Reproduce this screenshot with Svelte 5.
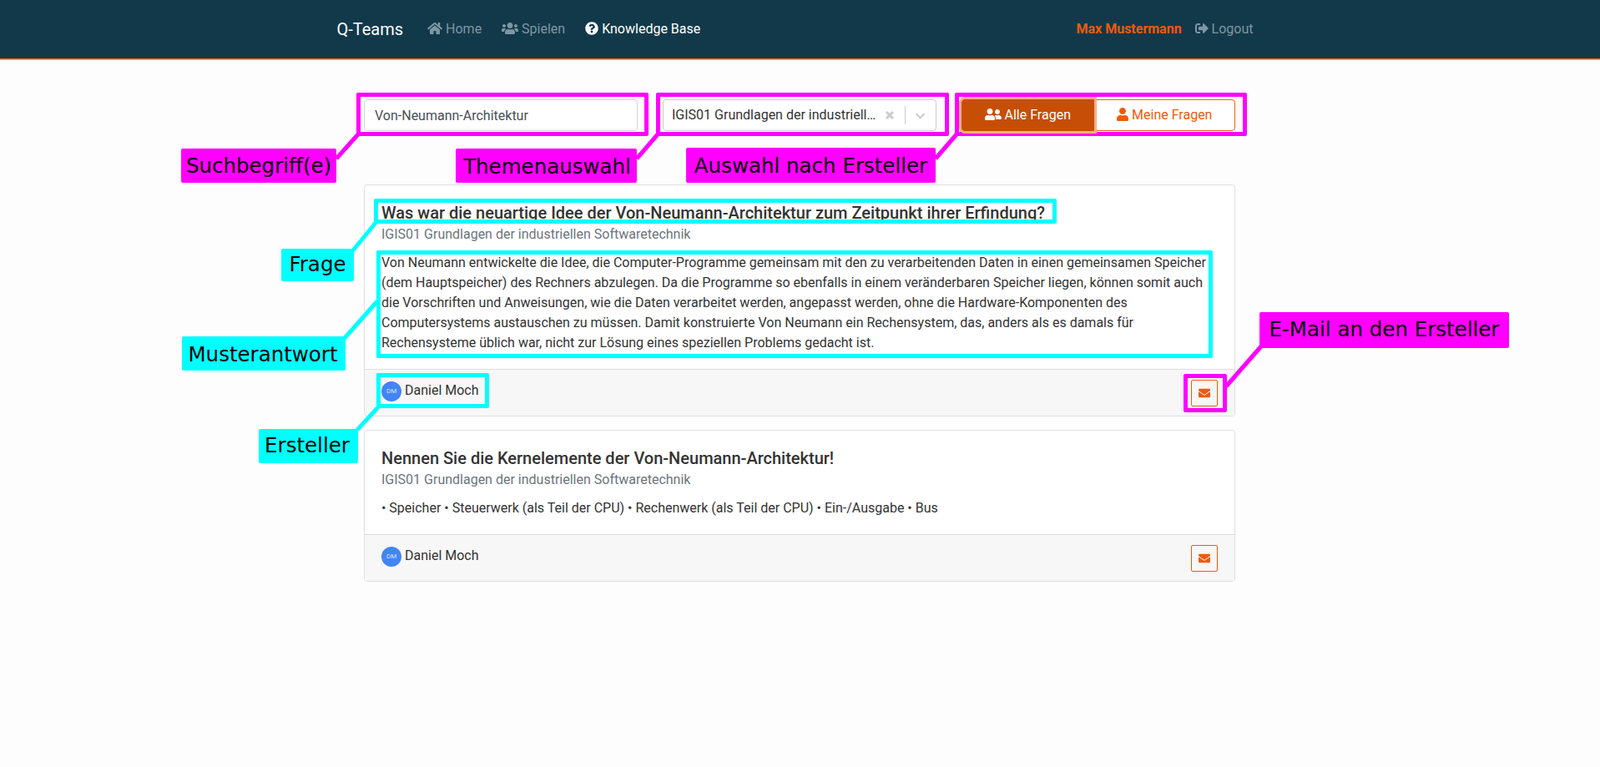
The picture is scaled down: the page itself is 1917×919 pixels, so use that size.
<script lang="ts">
  const icons = {
    home: ['0 0 576 512', 'M280.37 148.26L96 300.11V464a16 16 0 0 0 16 16l112.06-.29a16 16 0 0 0 15.92-16V368a16 16 0 0 1 16-16h64a16 16 0 0 1 16 16v95.64a16 16 0 0 0 16 16.05L464 480a16 16 0 0 0 16-16V300L295.67 148.26a12.19 12.19 0 0 0-15.3 0zM571.6 251.47L488 182.56V44.05a12 12 0 0 0-12-12h-56a12 12 0 0 0-12 12v72.61L318.47 43a48 48 0 0 0-61 0L4.34 251.47a12 12 0 0 0-1.6 16.9l25.5 31A12 12 0 0 0 45.15 301l235.22-193.74a12.19 12.19 0 0 1 15.3 0L530.9 301a12 12 0 0 0 16.9-1.6l25.5-31a12 12 0 0 0-1.7-16.93z'],
    users: ['0 0 640 512', 'M96 224c35.3 0 64-28.7 64-64s-28.7-64-64-64-64 28.7-64 64 28.7 64 64 64zm448 0c35.3 0 64-28.7 64-64s-28.7-64-64-64-64 28.7-64 64 28.7 64 64 64zm32 32h-64c-17.6 0-33.5 7.1-45.1 18.6 40.3 22.1 68.9 62 75.1 109.4h66c17.7 0 32-14.3 32-32v-32c0-35.3-28.7-64-64-64zm-256 0c61.9 0 112-50.1 112-112S381.9 32 320 32 208 82.1 208 144s50.1 112 112 112zm76.8 32h-8.3c-20.8 10-43.9 16-68.5 16s-47.6-6-68.5-16h-8.3C179.6 288 128 339.6 128 403.2V432c0 26.5 21.5 48 48 48h288c26.5 0 48-21.5 48-48v-28.8c0-63.6-51.6-115.2-115.2-115.2zm-223.7-13.4C161.5 263.1 145.6 256 128 256H64c-35.3 0-64 28.7-64 64v32c0 17.7 14.3 32 32 32h65.9c6.3-47.4 34.9-87.3 75.2-109.4z'],
    question: ['0 0 512 512', 'M504 256c0 136.997-111.043 248-248 248S8 392.997 8 256C8 119.083 119.043 8 256 8s248 111.083 248 248zM262.655 90c-54.497 0-89.255 22.957-116.549 63.758-3.536 5.286-2.353 12.415 2.715 16.258l34.699 26.31c5.205 3.947 12.621 3.008 16.665-2.122 17.864-22.658 30.113-35.797 57.303-35.797 20.429 0 45.698 13.148 45.698 32.958 0 14.976-12.363 22.667-32.534 33.976C247.128 238.528 216 254.941 216 296v4c0 6.627 5.373 12 12 12h56c6.627 0 12-5.373 12-12v-1.333c0-28.462 83.186-29.647 83.186-106.667 0-58.002-60.165-102-116.531-102zM256 338c-25.365 0-46 20.635-46 46 0 25.364 20.635 46 46 46s46-20.636 46-46c0-25.365-20.635-46-46-46z'],
    logout: ['0 0 512 512', 'M497 273L329 441c-15 15-41 4.5-41-17v-96H152c-13.3 0-24-10.7-24-24v-96c0-13.3 10.7-24 24-24h136V88c0-21.4 25.9-32 41-17l168 168c9.3 9.4 9.3 24.6 0 34zM192 436v-40c0-6.6-5.4-12-12-12H96c-17.7 0-32-14.3-32-32V160c0-17.7 14.3-32 32-32h84c6.6 0 12-5.4 12-12V76c0-6.6-5.4-12-12-12H96c-53 0-96 43-96 96v192c0 53 43 96 96 96h84c6.6 0 12-5.4 12-12z'],
    friends: ['0 0 640 512', 'M192 256c61.9 0 112-50.1 112-112S253.9 32 192 32 80 82.1 80 144s50.1 112 112 112zm76.8 32h-8.3c-20.8 10-43.9 16-68.5 16s-47.7-6-68.5-16h-8.3C51.6 288 0 339.6 0 403.2V432c0 26.5 21.5 48 48 48h288c26.5 0 48-21.5 48-48v-28.8c0-63.6-51.6-115.2-115.2-115.2zM480 256c53 0 96-43 96-96s-43-96-96-96-96 43-96 96 43 96 96 96zm48 32h-3.8c-13.9 4.8-28.6 8-44.2 8s-30.3-3.2-44.2-8H432c-20.4 0-39.2 5.9-55.7 15.4 24.4 26.3 39.7 61.2 39.7 99.8v38.4c0 2.2-.5 4.3-.6 6.4H592c26.5 0 48-21.5 48-48 0-61.9-50.1-112-112-112z'],
    user: ['0 0 448 512', 'M224 256c70.7 0 128-57.3 128-128S294.7 0 224 0 96 57.3 96 128s57.3 128 128 128zm89.6 32h-16.7c-22.2 10.2-46.9 16-72.9 16s-50.6-5.8-72.9-16h-16.7C60.2 288 0 348.2 0 422.4V464c0 26.5 21.5 48 48 48h352c26.5 0 48-21.5 48-48v-41.6c0-74.2-60.2-134.4-134.4-134.4z'],
    mail: ['0 0 512 512', 'M502.3 190.8c3.9-3.1 9.7-.2 9.7 4.7V400c0 26.5-21.5 48-48 48H48c-26.5 0-48-21.5-48-48V195.6c0-5 5.7-7.8 9.7-4.7 22.4 17.4 52.1 39.5 154.1 113.6 21.1 15.4 56.7 47.8 92.2 47.6 35.7.3 72-32.8 92.3-47.6 102-74.1 131.6-96.3 154-113.7zM256 320c23.2.4 56.6-29.2 73.4-41.4 132.7-96.3 142.8-104.7 173.4-128.7 5.8-4.5 9.2-11.5 9.2-18.9v-19c0-26.5-21.5-48-48-48H48C21.5 64 0 85.5 0 112v19c0 7.4 3.4 14.3 9.2 18.9 30.6 23.9 40.7 32.4 173.4 128.7 16.8 12.2 50.2 41.8 73.4 41.4z']
  };

  const subject = 'IGIS01 Grundlagen der industriellen Softwaretechnik';

  const questions = [
    {
      title: 'Was war die neuartige Idee der Von-Neumann-Architektur zum Zeitpunkt ihrer Erfindung?',
      answer: 'Von Neumann entwickelte die Idee, die Computer-Programme gemeinsam mit den zu verarbeitenden Daten in einen gemeinsamen Speicher (dem Hauptspeicher) des Rechners abzulegen. Da die Programme so ebenfalls in einem veränderbaren Speicher liegen, können somit auch die Vorschriften und Anweisungen, wie die Daten verarbeitet werden, angepasst werden, ohne die Hardware-Komponenten des Computersystems austauschen zu müssen. Damit konstruierte Von Neumann ein Rechensystem, das, anders als es damals für Rechensysteme üblich war, nicht zur Lösung eines speziellen Problems gedacht ist.'
    },
    {
      title: 'Nennen Sie die Kernelemente der Von-Neumann-Architektur!',
      answer: '• Speicher • Steuerwerk (als Teil der CPU) • Rechenwerk (als Teil der CPU) • Ein-/Ausgabe • Bus'
    }
  ];

  // annotations drawn on top of the screenshot: [x, y, w, h]
  const boxes = [
    { c: 'magenta', r: [427, 111, 350, 52] },
    { c: 'magenta', r: [786, 111, 351, 52] },
    { c: 'magenta', r: [1144, 111, 350, 52] },
    { c: 'cyan', r: [448, 238, 818, 30] },
    { c: 'cyan', r: [451, 300, 1002, 129] },
    { c: 'cyan', r: [451, 447, 135, 42] },
    { c: 'magenta', r: [1418, 448, 52, 46] }
  ];

  // pad: [top, right, bottom, left], nudges the text inside the label
  const labels = [
    { c: 'magenta', t: 'Suchbegriff(e)', r: [217, 178, 186, 41], pad: [0, 0, 0, 0] },
    { c: 'magenta', t: 'Themenauswahl', r: [546, 178, 217, 41], pad: [2, 0, 0, 2] },
    { c: 'magenta', t: 'Auswahl nach Ersteller', r: [822, 177, 299, 42], pad: [2, 0, 0, 0] },
    { c: 'cyan', t: 'Frage', r: [337, 298, 87, 39], pad: [0, 0, 2, 0] },
    { c: 'cyan', t: 'Musterantwort', r: [218, 403, 196, 41], pad: [2, 2, 0, 0] },
    { c: 'cyan', t: 'Ersteller', r: [310, 514, 119, 41], pad: [0, 3, 2, 0] },
    { c: 'magenta', t: 'E-Mail an den Ersteller', r: [1509, 374, 299, 43], pad: [0, 0, 2, 0] }
  ];

  const lines = [
    { c: 'magenta', p: '403,190 429,161' },
    { c: 'magenta', p: '763,190 788,161' },
    { c: 'magenta', p: '1121,190 1146,161' },
    { c: 'cyan', p: '423,300 450,267' },
    { c: 'cyan', p: '413,405 452,361' },
    { c: 'cyan', p: '428,515 453,488' },
    { c: 'magenta', p: '1469,463 1511,415' }
  ];

  const rect = (r: number[]) => `left:${r[0]}px;top:${r[1]}px;width:${r[2]}px;height:${r[3]}px`;
  const padding = (p: number[]) => `padding:${p.map((v) => v + 'px').join(' ')}`;
</script>

{#snippet icon(name: keyof typeof icons, cls = '')}
  <svg class="icon {cls}" viewBox={icons[name][0]} aria-hidden="true"><path fill="currentColor" d={icons[name][1]} /></svg>
{/snippet}

<nav class="navbar">
  <div class="nav-inner">
    <a class="brand" href="#top">Q-Teams</a>
    <a class="nav-link" href="#top">{@render icon('home')} Home</a>
    <a class="nav-link" href="#top">{@render icon('users')} Spielen</a>
    <a class="nav-link active" href="#top">{@render icon('question')} Knowledge Base</a>
    <span class="user-name">Max Mustermann</span>
    <a class="nav-link" href="#top">{@render icon('logout')} Logout</a>
  </div>
</nav>

<main class="content">
  <div class="filters">
    <input class="search" type="text" value="Von-Neumann-Architektur" />
    <div class="select">
      <span class="select-value">IGIS01 Grundlagen der industriellen Softwaretechnik</span>
      <svg class="select-clear" viewBox="0 0 12 12"><path d="M2 2l8 8M10 2l-8 8" /></svg>
      <span class="select-sep"></span>
      <svg class="select-arrow" viewBox="0 0 12 12"><path d="M1.5 4l4.5 4.5L10.500 4" /></svg>
    </div>
    <div class="btn-group">
      <button class="btn on">{@render icon('friends')} Alle Fragen</button>
      <button class="btn">{@render icon('user')} Meine Fragen</button>
    </div>
  </div>

  {#each questions as q}
    <article class="card">
      <div class="card-body">
        <h5>{q.title}</h5>
        <div class="subject">{subject}</div>
        <p>{q.answer}</p>
      </div>
      <div class="card-footer">
        <div class="author">
          <span class="avatar">DM</span>
          <span class="author-name">Daniel Moch</span>
        </div>
        <button class="mail">{@render icon('mail')}</button>
      </div>
    </article>
  {/each}
</main>

<div class="overlay">
  <svg class="overlay-lines" width="1917" height="919">
    {#each lines as l}
      <polyline points={l.p} stroke={l.c} stroke-width="5" fill="none" />
    {/each}
  </svg>
  {#each boxes as b}
    <div class="anno-box {b.c}" style={rect(b.r)}></div>
  {/each}
  {#each labels as l}
    <div class="anno-label {l.c}" style="{rect(l.r)};{padding(l.pad)}">{l.t}</div>
  {/each}
</div>

<style>
  :global(body) {
    background: #fdfdfd;
    color: #333;
    font-family: Roboto, "Liberation Sans", sans-serif;
    font-size: 16px;
    line-height: 24px;
  }

  .icon {
    display: inline-block;
    height: 1em;
    width: auto;
    vertical-align: -0.125em;
  }

  .navbar {
    height: 70px;
    background: #12394a;
    border-bottom: 1px solid #f05a0a;
    box-shadow: 0 1px 0 #f8ad85;
  }

  .nav-inner {
    width: 1110px;
    height: 70px;
    margin: 0 auto;
    display: flex;
    align-items: center;
  }

  .brand {
    color: #fff;
    font-size: 20px;
    margin-right: 17px;
    text-decoration: none;
  }

  .nav-link {
    color: #7d97a3;
    padding: 0 12px;
    text-decoration: none;
  }

  .nav-link.active {
    color: #fff;
  }

  .user-name {
    margin-left: auto;
    margin-right: 4px;
    color: #f05a0a;
    font-weight: 700;
  }

  .content {
    width: 1044px;
    margin: 0 auto;
    padding: 48px 1px 0 0;
  }

  .filters {
    display: grid;
    grid-template-columns: repeat(3, 328px);
    gap: 30px;
    margin-bottom: 64px;
  }

  .search {
    box-sizing: border-box;
    height: 38px;
    width: 100%;
    padding: 0 12px;
    border: 1px solid #ced4da;
    border-radius: 4px;
    background: #fff;
    color: #495057;
    font: inherit;
  }

  .select {
    box-sizing: border-box;
    height: 38px;
    display: flex;
    align-items: center;
    padding: 0 12px 0 10px;
    border: 1px solid #ccc;
    border-radius: 4px;
    background: #fff;
    color: #333;
  }

  .select-value {
    flex: 1;
    min-width: 0;
    white-space: nowrap;
    overflow: hidden;
    text-overflow: ellipsis;
  }

  .select-clear,
  .select-arrow {
    flex-shrink: 0;
    fill: none;
    stroke: #ccc;
  }

  .select-clear {
    width: 12px;
    height: 12px;
    margin-left: 10px;
    stroke-width: 3;
  }

  .select-arrow {
    width: 13px;
    height: 13px;
    stroke-width: 2;
  }

  .select-sep {
    width: 1px;
    height: 22px;
    margin: 0 11px 0 12px;
    background: #ccc;
  }

  .btn-group {
    display: flex;
  }

  .btn {
    flex: 1 1 auto;
    height: 38px;
    border: 1px solid #f05a0a;
    border-radius: 0 4px 4px 0;
    background: #fff;
    color: #f05a0a;
    font: inherit;
  }

  .btn.on {
    position: relative;
    z-index: 1;
    background: #c74e07;
    border-color: #c74e07;
    border-radius: 4px 0 0 4px;
    box-shadow: 0 0 0 3px #f8ad85;
    color: #fff;
  }

  .card {
    background: #fff;
    border: 1px solid #dfdfdf;
    border-radius: 4px;
    margin-bottom: 16px;
  }

  .card-body {
    padding: 20px 20px 19px;
  }

  h5 {
    margin: 0;
    font-size: 20px;
    font-weight: 500;
    line-height: 27px;
  }

  .subject {
    color: #6c757d;
  }

  p {
    margin: 10px 0 0;
  }

  .card-footer {
    box-sizing: border-box;
    height: 56px;
    display: flex;
    justify-content: space-between;
    align-items: flex-start;
    padding: 12px 20px 0;
    background: #f7f7f7;
    border-top: 1px solid #dfdfdf;
    border-radius: 0 0 4px 4px;
  }

  .author {
    display: flex;
    gap: 4px;
    align-items: flex-start;
  }

  .author-name {
    margin-top: 1px;
  }

  .avatar {
    width: 24px;
    height: 24px;
    margin-top: 2px;
    border-radius: 50%;
    background: #4285f4;
    color: #d6e4fd;
    font-size: 8px;
    text-align: center;
  }

  .mail {
    width: 32px;
    height: 32px;
    padding: 0;
    border: 1px solid #f05a0a;
    border-radius: 2px;
    background: transparent;
    color: #f05a0a;
    font-size: 14px;
  }

  .overlay {
    position: absolute;
    inset: 0 auto auto 0;
    width: 1917px;
    height: 919px;
    pointer-events: none;
  }

  .overlay-lines {
    position: absolute;
    left: 0;
    top: 0;
  }

  .anno-box {
    position: absolute;
    box-sizing: border-box;
    border: 5px solid;
    border-radius: 2px;
  }

  .anno-box.magenta {
    border-color: magenta;
  }

  .anno-box.cyan {
    border-color: cyan;
  }

  .anno-label {
    position: absolute;
    box-sizing: border-box;
    display: flex;
    align-items: center;
    justify-content: center;
    border-radius: 2px;
    color: #000;
    font-family: "DejaVu Sans", sans-serif;
    font-size: 24.5px;
    white-space: nowrap;
  }

  .anno-label.magenta {
    background: magenta;
  }

  .anno-label.cyan {
    background: cyan;
  }
</style>
